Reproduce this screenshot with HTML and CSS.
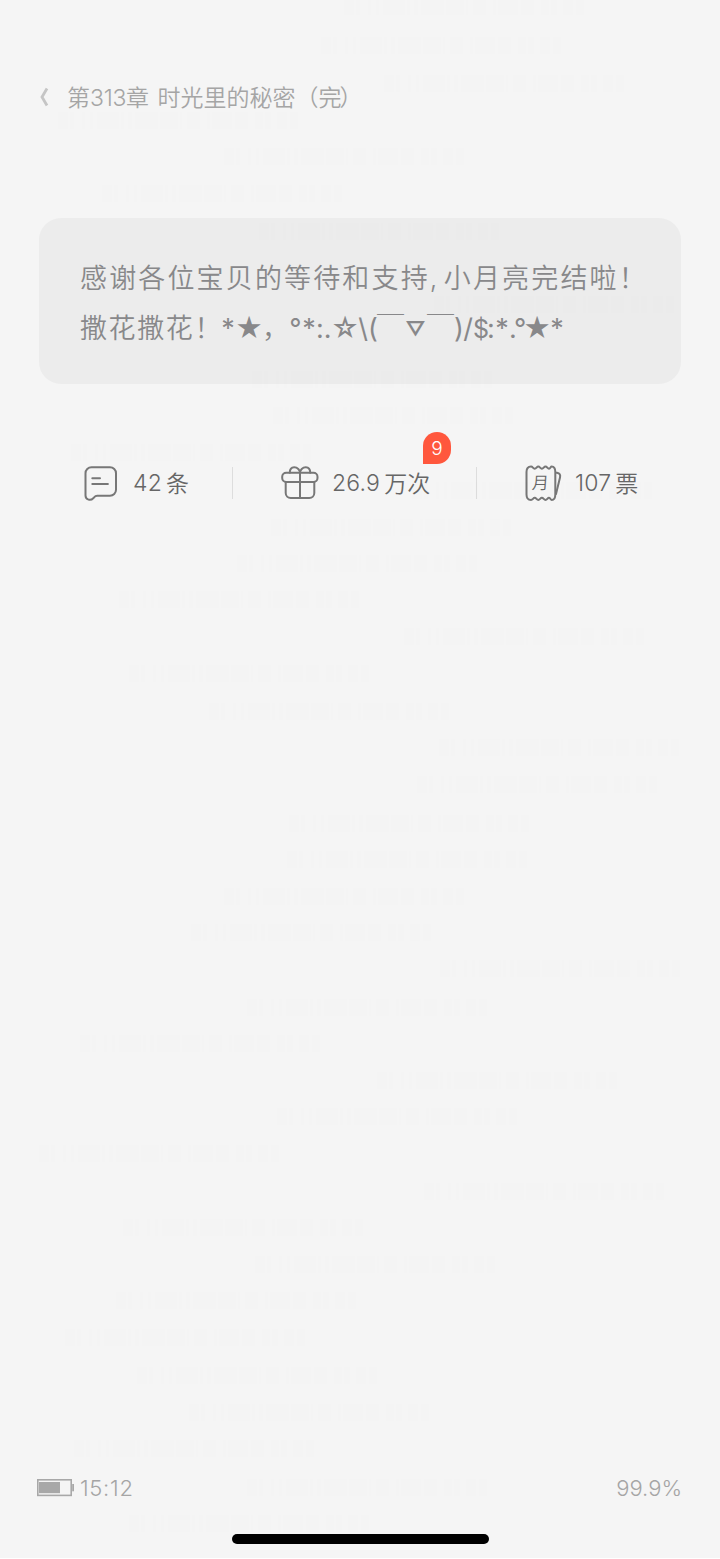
FILE: index.html
```html
<!DOCTYPE html>
<html lang="zh-CN">

<head>
    <meta charset="UTF-8">
    <meta name="viewport" content="width=device-width, initial-scale=1.0">
    <title>第313章 时光里的秘密（完）</title>

    <link rel="stylesheet" href="styles.css">
</head>

<body>
    <div class="page">
        <header class="chapter">
            <svg class="back" viewBox="0 0 10 20"><path d="M8 1.5L3 10L8 18.5" /></svg>
            <h1>第<span class="chapter-num">313</span>章 时光里的秘密（完<span class="close">）</span></h1>
        </header>

        <section class="note">
            <p class="line-one">感谢各位宝贝的等待和支持<span class="comma">,</span>小月亮完结啦！</p>
            <p class="line-two"><span class="cheer">撒花撒花！</span><span class="ast">*</span><span class="star">★</span><span class="wide-comma">，</span><span class="deg">°</span><span class="ast">*</span><span class="dots">:.</span><span class="star">☆</span><span class="slash">\</span><span class="paren">(</span><span class="brow">￣</span><span class="mouth">▽</span><span class="brow">￣</span><span class="paren">)</span><span class="slash">/</span><span class="dollar">$</span><span class="colon">:</span><span class="ast">*</span><span class="dot">.</span><span class="deg small">°</span><span class="star">★</span><span class="ast">*</span></p>
        </section>

        <nav class="actions">
            <a class="action">
                <svg class="icon" width="38" height="38" viewBox="0 0 38 38">
                    <path d="M9.5 3.2H28a6 6 0 0 1 6 6v16.5a6 6 0 0 1-6 6H15.2c-2.2 0-2.7 1.2-4 2.6-2.4 2.6-7.7 1.8-7.7-2.7V9.2a6 6 0 0 1 6-6z" />
                    <path d="M10.3 14.2h7.7M10.3 20h15.6" />
                </svg>
                <span class="num">42</span><span class="unit">条</span>
            </a>
            <a class="action">
                <svg class="icon" width="38" height="38" viewBox="0 0 38 38">
                    <rect x="1.200" y="8.700" width="35.300" height="9.200" rx="4" />
                    <path d="M4.700 18v11a5 5 0 0 0 5 5H28.300a5 5 0 0 0 5-5V18M19 9v25" />
                    <path d="M8.800 8.700c0-4 2.200-5.500 4.400-5.500 3.200 0 5.800 2.800 5.800 5.500 0-2.700 2.600-5.500 5.800-5.500 2.200 0 4.400 1.500 4.400 5.500" />
                </svg>
                <span class="num">26.9</span><span class="unit">万次</span>
                <span class="badge">9</span>
            </a>
            <a class="action">
                <span class="ticket">
                    <svg class="icon" width="38" height="38" viewBox="0 0 38 38">
                        <path d="M2.500 8q0-5.500 4.500-5.500c1.800 0 2 2.200 3.700 2.200s2-2.200 3.600-2.200 2 2.200 3.600 2.200 2-2.200 3.600-2.200 2 2.200 3.500 2.200 1.500-2.200 2.700-2.200q3.600 0 3.600 5.500v22.500q0 5.500-3.600 5.500c-1.200 0-1.200-2.200-2.700-2.200s-1.900 2.200-3.500 2.200-2-2.200-3.600-2.200-2 2.200-3.600 2.200-2-2.200-3.600-2.200-1.900 2.200-3.700 2.200q-4.500 0-4.500-5.500z" />
                        <path d="M32 8.700h1q4 .8 3 4.800L32 30" />
                    </svg>
                    <span class="moon">月</span>
                </span>
                <span class="num">107</span><span class="unit">票</span>
            </a>
        </nav>

        <footer class="status">
            <svg class="battery" width="38" height="18" viewBox="0 0 38 18">
                <rect class="case" x=".8" y=".8" width="33.400" height="15.600" />
                <rect class="level" x="2" y="3" width="21" height="11.200" />
                <rect class="level" x="35.200" y="5" width="1.800" height="7.300" />
            </svg>
            <span class="time">15:12</span>
            <span class="progress">99.9%</span>
        </footer>
        <div class="home-bar"></div>

        <svg class="watermark" width="720" height="1558" viewBox="0 0 720 1558">
            <defs>
                <path id="mark" d="M0 0h10v17H0zM12 0h4v17h-4zM24 0h3v17h-3zM32 0h3v17h-3zM39 0h22v17H39zM63 0h3v17h-3zM70 0h4v17h-4zM77 0h23v17H77zM102 0h18v17h-18zM122 0h2v17h-2zM129 0h13v17h-13zM149 0h3v17h-3zM154 0h20v17h-20zM177 0h13v17h-13zM197 0h8v17h-8zM207 0h6v17h-6zM219 0h10v17h-10zM232 0h8v17h-8z" />
            </defs>
            <use href="#mark" x="344" y="-2" />
            <use href="#mark" x="321" y="37" />
            <use href="#mark" x="384" y="75" />
            <use href="#mark" x="58" y="112" />
            <use href="#mark" x="224" y="148" />
            <use href="#mark" x="102" y="185" />
            <use href="#mark" x="259" y="223" />
            <use href="#mark" x="434" y="296" />
            <use href="#mark" x="252" y="371" />
            <use href="#mark" x="273" y="407" />
            <use href="#mark" x="71" y="444" />
            <use href="#mark" x="412" y="482" />
            <use href="#mark" x="271" y="519" />
            <use href="#mark" x="237" y="555" />
            <use href="#mark" x="119" y="591" />
            <use href="#mark" x="404" y="628" />
            <use href="#mark" x="129" y="665" />
            <use href="#mark" x="209" y="703" />
            <use href="#mark" x="439" y="739" />
            <use href="#mark" x="417" y="776" />
            <use href="#mark" x="289" y="815" />
            <use href="#mark" x="287" y="851" />
            <use href="#mark" x="224" y="888" />
            <use href="#mark" x="191" y="924" />
            <use href="#mark" x="440" y="960" />
            <use href="#mark" x="247" y="999" />
            <use href="#mark" x="80" y="1035" />
            <use href="#mark" x="377" y="1072" />
            <use href="#mark" x="277" y="1108" />
            <use href="#mark" x="39" y="1145" />
            <use href="#mark" x="424" y="1183" />
            <use href="#mark" x="123" y="1219" />
            <use href="#mark" x="255" y="1256" />
            <use href="#mark" x="116" y="1292" />
            <use href="#mark" x="65" y="1329" />
            <use href="#mark" x="137" y="1367" />
            <use href="#mark" x="189" y="1404" />
            <use href="#mark" x="74" y="1440" />
            <use href="#mark" x="247" y="1479" />
            <use href="#mark" x="129" y="1515" />
        </svg>
    </div>
</body>

</html>
```

FILE: styles.css
```css
* {
    box-sizing: border-box;
}

body {
    margin: 0;
    background-color: #fff;
    font-family: Inter, "Noto Sans CJK SC", sans-serif;
    font-weight: 350;
}

.page {
    display: flex;
    flex-direction: column;
    position: relative;
    height: 1558px;
    padding: 80px 39px 0;
    background-color: #f5f5f5;
    color: #666;
}

.watermark {
    position: absolute;
    left: 0;
    top: 0;
    fill: rgba(0, 0, 0, 0.004);
    pointer-events: none;
}

.chapter {
    display: flex;
    align-items: center;
    height: 34px;
    color: #a5a5a5;
}

.back {
    width: 10px;
    height: 20px;
    margin-right: 18px;
    fill: none;
    stroke: #c5c5c5;
    stroke-width: 2.8;
}

h1 {
    margin: -2px 0 0;
    font-size: 23px;
    font-weight: 350;
    word-spacing: 2px;
    white-space: nowrap;
}

.chapter-num {
    letter-spacing: -0.3px;
}

.close {
    margin-left: -2px;
}

.note {
    height: 166px;
    margin-top: 104px;
    padding: 36px 41px 30px;
    border-radius: 22px;
    background-color: #ececec;
    color: #88888a;
    font-size: 27px;
    line-height: 50px;
    white-space: nowrap;
}

.note p {
    margin: 0;
    height: 50px;
}

.line-one {
    letter-spacing: 2.15px;
}

.comma {
    display: inline-block;
    width: 14px;
}

.line-two {
    display: flex;
}

.line-two span {
    flex: none;
    font-weight: 400;
    text-align: center;
}

.line-two .cheer {
    width: 141px;
    font-weight: 350;
    letter-spacing: 1.6px;
    text-align: left;
}

.ast {
    width: 14px;
}

.star {
    width: 27px;
}

.line-two .wide-comma {
    width: 27px;
    font-weight: 350;
    text-align: left;
}

.deg {
    width: 13px;
}

.dots {
    width: 15px;
}

.slash {
    width: 10px;
}

.paren {
    width: 9px;
}

.brow {
    width: 27px;
}

.line-two .mouth {
    width: 23px;
    font-size: 20px;
    font-weight: 700;
}

.dollar {
    width: 14px;
    font-size: 25px;
}

.colon {
    width: 8px;
}

.dot {
    width: 5px;
}

.small {
    width: 9px;
}

.actions {
    display: grid;
    grid-template-columns: 193px 244px 205px;
    height: 32px;
    margin-top: 83px;
}

.action {
    display: flex;
    align-items: center;
    position: relative;
    height: 32px;
    padding-left: 43px;
    font-size: 23px;
    white-space: nowrap;
}

.action + .action {
    padding-left: 48px;
    border-left: 1px solid #ddd;
}

.icon {
    display: block;
    flex: none;
    fill: none;
    stroke: #777;
    stroke-width: 2;
    stroke-linecap: round;
    stroke-linejoin: round;
}

.num {
    margin-left: 13px;
    letter-spacing: 0.2px;
}

.unit {
    margin: -2px 0 0 4px;
}

.badge {
    position: absolute;
    left: 190px;
    top: -35px;
    width: 28px;
    height: 32px;
    border-radius: 14px 14px 14px 0;
    background-color: #ff573d;
    color: #fff;
    font-size: 19px;
    line-height: 33px;
    text-align: center;
}

.ticket {
    position: relative;
    margin-left: -1px;
}

.moon {
    position: absolute;
    left: 8px;
    top: 6px;
    font-size: 17px;
    line-height: 26px;
    transform: skewX(-4deg);
}

.status {
    display: flex;
    align-items: center;
    height: 30px;
    margin: auto -1px 0 -2px;
    color: #a5a5a5;
    font-size: 22px;
}

.battery {
    margin-right: 5px;
}

.case {
    fill: none;
    stroke: #a8a8a8;
    stroke-width: 1.6;
}

.level {
    fill: #a8a8a8;
}

.time {
    letter-spacing: 0.7px;
}

.progress {
    margin-left: auto;
}

.home-bar {
    flex: none;
    width: 257px;
    height: 10px;
    margin: 31px 0 14px 193px;
    border-radius: 5px;
    background-color: #000;
}
```
